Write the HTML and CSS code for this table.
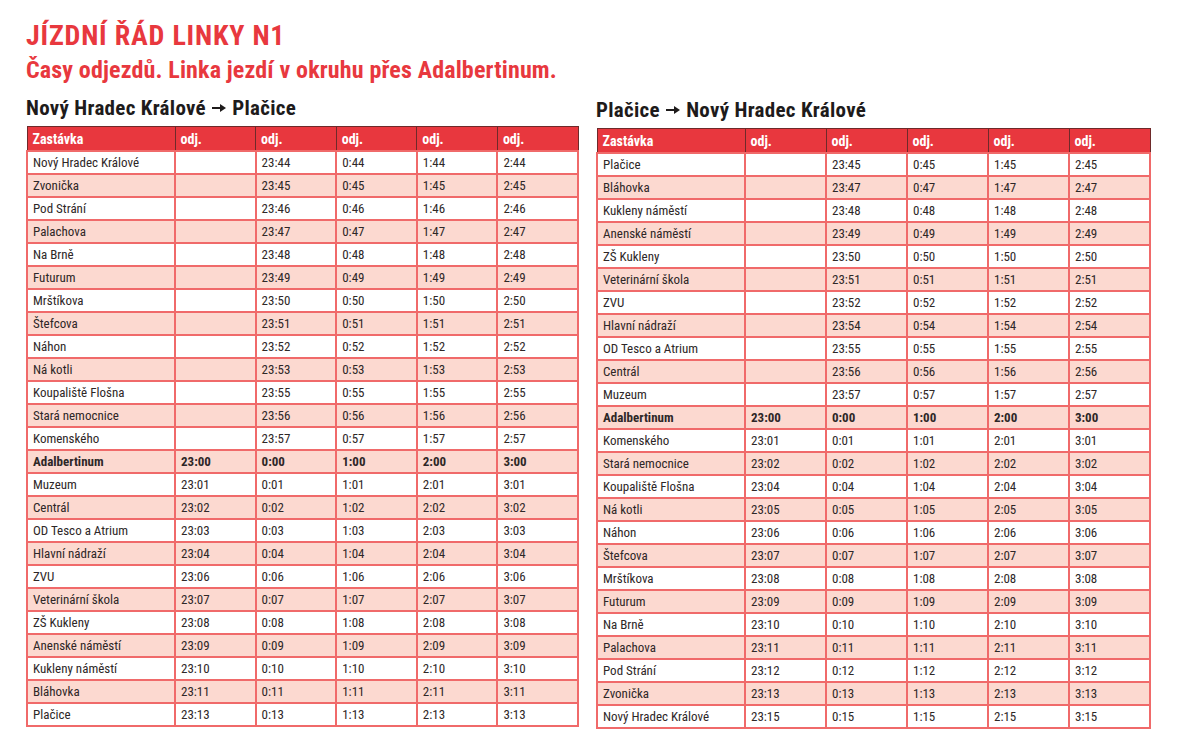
FILE: index.html
```html
<!DOCTYPE html>
<html lang="cs">
<head>
<meta charset="utf-8">
<title>Jízdní řád linky N1</title>
<link rel="stylesheet" href="styles.css">
</head>
<body>
<div class="page">
  <header class="head">
    <h1 class="title">JÍZDNÍ ŘÁD LINKY N1</h1>
    <p class="subtitle">Časy odjezdů. Linka jezdí v okruhu přes Adalbertinum.</p>
  </header>
  <div class="tables">
    <section class="dir dir-left">
      <h2 class="dir-title">Nový Hradec Králové <svg class="arrow" viewBox="0 0 14 8" width="14" height="8" aria-hidden="true"><path d="M0 3h8V0l6 4-6 4V5H0z" fill="#1e1b1b"/></svg> Plačice</h2>
      <table class="tt">
        <colgroup><col class="c-stop"><col><col><col><col><col></colgroup>
        <thead><tr><th>Zastávka</th><th>odj.</th><th>odj.</th><th>odj.</th><th>odj.</th><th>odj.</th></tr></thead>
        <tbody>
          <tr><td>Nový Hradec Králové</td><td></td><td>23:44</td><td>0:44</td><td>1:44</td><td>2:44</td></tr>
          <tr><td>Zvonička</td><td></td><td>23:45</td><td>0:45</td><td>1:45</td><td>2:45</td></tr>
          <tr><td>Pod Strání</td><td></td><td>23:46</td><td>0:46</td><td>1:46</td><td>2:46</td></tr>
          <tr><td>Palachova</td><td></td><td>23:47</td><td>0:47</td><td>1:47</td><td>2:47</td></tr>
          <tr><td>Na Brně</td><td></td><td>23:48</td><td>0:48</td><td>1:48</td><td>2:48</td></tr>
          <tr><td>Futurum</td><td></td><td>23:49</td><td>0:49</td><td>1:49</td><td>2:49</td></tr>
          <tr><td>Mrštíkova</td><td></td><td>23:50</td><td>0:50</td><td>1:50</td><td>2:50</td></tr>
          <tr><td>Štefcova</td><td></td><td>23:51</td><td>0:51</td><td>1:51</td><td>2:51</td></tr>
          <tr><td>Náhon</td><td></td><td>23:52</td><td>0:52</td><td>1:52</td><td>2:52</td></tr>
          <tr><td>Ná kotli</td><td></td><td>23:53</td><td>0:53</td><td>1:53</td><td>2:53</td></tr>
          <tr><td>Koupaliště Flošna</td><td></td><td>23:55</td><td>0:55</td><td>1:55</td><td>2:55</td></tr>
          <tr><td>Stará nemocnice</td><td></td><td>23:56</td><td>0:56</td><td>1:56</td><td>2:56</td></tr>
          <tr><td>Komenského</td><td></td><td>23:57</td><td>0:57</td><td>1:57</td><td>2:57</td></tr>
          <tr class="hub"><td>Adalbertinum</td><td>23:00</td><td>0:00</td><td>1:00</td><td>2:00</td><td>3:00</td></tr>
          <tr><td>Muzeum</td><td>23:01</td><td>0:01</td><td>1:01</td><td>2:01</td><td>3:01</td></tr>
          <tr><td>Centrál</td><td>23:02</td><td>0:02</td><td>1:02</td><td>2:02</td><td>3:02</td></tr>
          <tr><td>OD Tesco a Atrium</td><td>23:03</td><td>0:03</td><td>1:03</td><td>2:03</td><td>3:03</td></tr>
          <tr><td>Hlavní nádraží</td><td>23:04</td><td>0:04</td><td>1:04</td><td>2:04</td><td>3:04</td></tr>
          <tr><td>ZVU</td><td>23:06</td><td>0:06</td><td>1:06</td><td>2:06</td><td>3:06</td></tr>
          <tr><td>Veterinární škola</td><td>23:07</td><td>0:07</td><td>1:07</td><td>2:07</td><td>3:07</td></tr>
          <tr><td>ZŠ Kukleny</td><td>23:08</td><td>0:08</td><td>1:08</td><td>2:08</td><td>3:08</td></tr>
          <tr><td>Anenské náměstí</td><td>23:09</td><td>0:09</td><td>1:09</td><td>2:09</td><td>3:09</td></tr>
          <tr><td>Kukleny náměstí</td><td>23:10</td><td>0:10</td><td>1:10</td><td>2:10</td><td>3:10</td></tr>
          <tr><td>Bláhovka</td><td>23:11</td><td>0:11</td><td>1:11</td><td>2:11</td><td>3:11</td></tr>
          <tr><td>Plačice</td><td>23:13</td><td>0:13</td><td>1:13</td><td>2:13</td><td>3:13</td></tr>
        </tbody>
      </table>
    </section>
    <section class="dir dir-right">
      <h2 class="dir-title">Plačice <svg class="arrow" viewBox="0 0 14 8" width="14" height="8" aria-hidden="true"><path d="M0 3h8V0l6 4-6 4V5H0z" fill="#1e1b1b"/></svg> Nový Hradec Králové</h2>
      <table class="tt">
        <colgroup><col class="c-stop"><col><col><col><col><col></colgroup>
        <thead><tr><th>Zastávka</th><th>odj.</th><th>odj.</th><th>odj.</th><th>odj.</th><th>odj.</th></tr></thead>
        <tbody>
          <tr><td>Plačice</td><td></td><td>23:45</td><td>0:45</td><td>1:45</td><td>2:45</td></tr>
          <tr><td>Bláhovka</td><td></td><td>23:47</td><td>0:47</td><td>1:47</td><td>2:47</td></tr>
          <tr><td>Kukleny náměstí</td><td></td><td>23:48</td><td>0:48</td><td>1:48</td><td>2:48</td></tr>
          <tr><td>Anenské náměstí</td><td></td><td>23:49</td><td>0:49</td><td>1:49</td><td>2:49</td></tr>
          <tr><td>ZŠ Kukleny</td><td></td><td>23:50</td><td>0:50</td><td>1:50</td><td>2:50</td></tr>
          <tr><td>Veterinární škola</td><td></td><td>23:51</td><td>0:51</td><td>1:51</td><td>2:51</td></tr>
          <tr><td>ZVU</td><td></td><td>23:52</td><td>0:52</td><td>1:52</td><td>2:52</td></tr>
          <tr><td>Hlavní nádraží</td><td></td><td>23:54</td><td>0:54</td><td>1:54</td><td>2:54</td></tr>
          <tr><td>OD Tesco a Atrium</td><td></td><td>23:55</td><td>0:55</td><td>1:55</td><td>2:55</td></tr>
          <tr><td>Centrál</td><td></td><td>23:56</td><td>0:56</td><td>1:56</td><td>2:56</td></tr>
          <tr><td>Muzeum</td><td></td><td>23:57</td><td>0:57</td><td>1:57</td><td>2:57</td></tr>
          <tr class="hub"><td>Adalbertinum</td><td>23:00</td><td>0:00</td><td>1:00</td><td>2:00</td><td>3:00</td></tr>
          <tr><td>Komenského</td><td>23:01</td><td>0:01</td><td>1:01</td><td>2:01</td><td>3:01</td></tr>
          <tr><td>Stará nemocnice</td><td>23:02</td><td>0:02</td><td>1:02</td><td>2:02</td><td>3:02</td></tr>
          <tr><td>Koupaliště Flošna</td><td>23:04</td><td>0:04</td><td>1:04</td><td>2:04</td><td>3:04</td></tr>
          <tr><td>Ná kotli</td><td>23:05</td><td>0:05</td><td>1:05</td><td>2:05</td><td>3:05</td></tr>
          <tr><td>Náhon</td><td>23:06</td><td>0:06</td><td>1:06</td><td>2:06</td><td>3:06</td></tr>
          <tr><td>Štefcova</td><td>23:07</td><td>0:07</td><td>1:07</td><td>2:07</td><td>3:07</td></tr>
          <tr><td>Mrštíkova</td><td>23:08</td><td>0:08</td><td>1:08</td><td>2:08</td><td>3:08</td></tr>
          <tr><td>Futurum</td><td>23:09</td><td>0:09</td><td>1:09</td><td>2:09</td><td>3:09</td></tr>
          <tr><td>Na Brně</td><td>23:10</td><td>0:10</td><td>1:10</td><td>2:10</td><td>3:10</td></tr>
          <tr><td>Palachova</td><td>23:11</td><td>0:11</td><td>1:11</td><td>2:11</td><td>3:11</td></tr>
          <tr><td>Pod Strání</td><td>23:12</td><td>0:12</td><td>1:12</td><td>2:12</td><td>3:12</td></tr>
          <tr><td>Zvonička</td><td>23:13</td><td>0:13</td><td>1:13</td><td>2:13</td><td>3:13</td></tr>
          <tr><td>Nový Hradec Králové</td><td>23:15</td><td>0:15</td><td>1:15</td><td>2:15</td><td>3:15</td></tr>
        </tbody>
      </table>
    </section>
  </div>
</div>
</body>
</html>
```

FILE: styles.css
```css
html, body {
  margin: 0;
  padding: 0;
  background: #ffffff;
}

body {
  font-family: "Liberation Sans Narrow", "Roboto Condensed", "DejaVu Sans Condensed", "Liberation Sans", sans-serif;
  color: #2b2222;
}

.page {
  padding: 20px 0 0 26px;
  width: 1126px;
}

.head {
  display: flex;
  flex-direction: column;
}

.title {
  margin: 0;
  font-size: 28px;
  line-height: 32px;
  font-weight: 700;
  color: #e8383e;
  letter-spacing: 0.8px;
}

.subtitle {
  margin: 4px 0 0 0;
  font-size: 24px;
  line-height: 28px;
  font-weight: 700;
  color: #e8383e;
  letter-spacing: 0.15px;
}

.tables {
  display: flex;
  gap: 17px;
  margin-top: 12px;
}

.dir {
  display: flex;
  flex-direction: column;
}

.dir-left {
  width: 553px;
}

.dir-right {
  width: 555px;
  margin-top: 2px;
}

.dir-title {
  margin: 0 0 6px 0;
  font-size: 21px;
  line-height: 24px;
  font-weight: 700;
  color: #1e1b1b;
  letter-spacing: 0.3px;
}

.arrow {
  display: inline-block;
  vertical-align: middle;
  margin: 0 1px 3px 1px;
}

.tt {
  width: 100%;
  border-collapse: collapse;
  table-layout: fixed;
  font-size: 13px;
}

.c-stop {
  width: 148px;
}

.tt th,
.tt td {
  text-align: left;
  padding: 0 0 0 5px;
  white-space: nowrap;
  overflow: hidden;
}

.tt th {
  height: 23px;
  background: #e8373e;
  color: #ffffff;
  font-weight: 700;
  font-size: 14px;
  border: 1.5px solid #6e2a2a;
}

.tt td {
  height: 21px;
  border: 2px solid #f06a6a;
  color: #2e2727;
}

.tt tbody tr:nth-child(even) td {
  background: #fcd9d0;
}

.tt tr.hub td {
  font-weight: 700;
}
```
